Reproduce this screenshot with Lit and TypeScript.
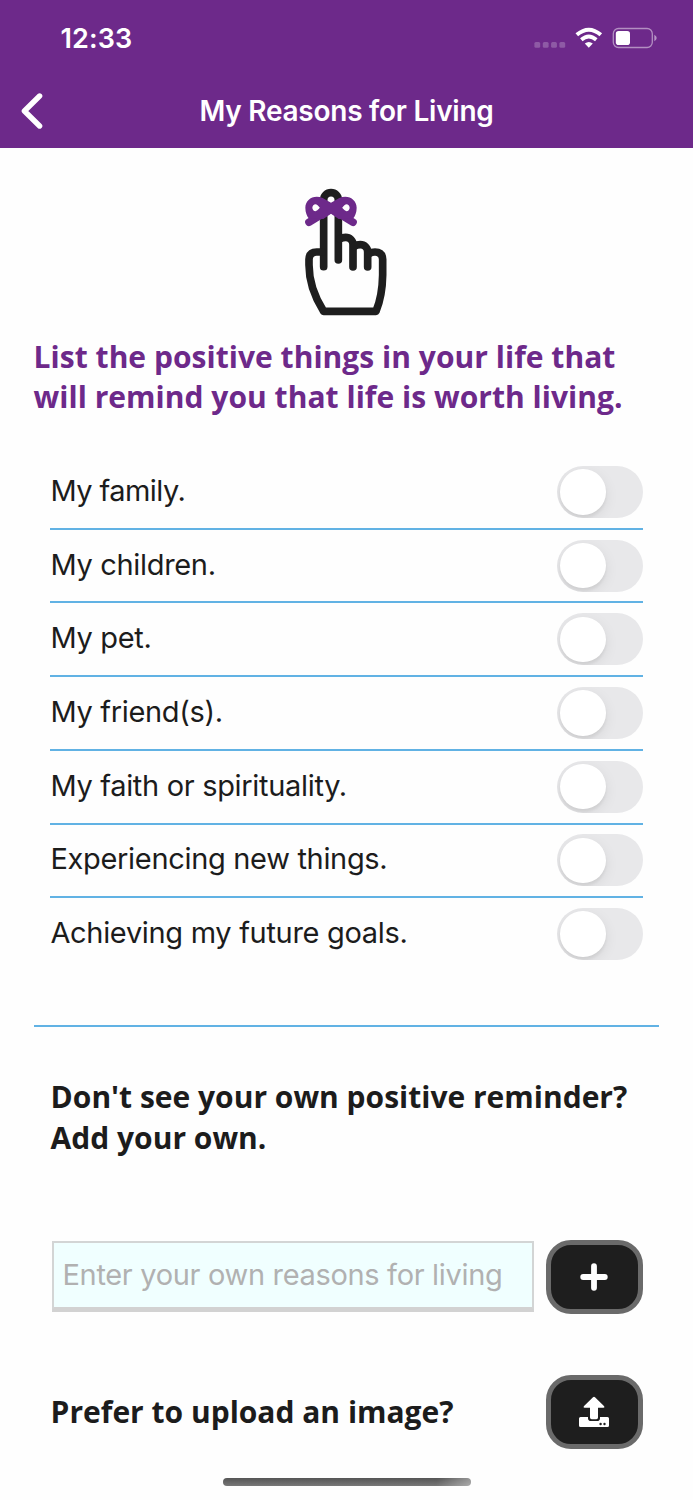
import { LitElement, html, css, svg } from "lit";
import { customElement, property, state } from "lit/decorators.js";
import { classMap } from "lit/directives/class-map.js";

@customElement("toggle-switch")
class ToggleSwitch extends LitElement {
  @property({ type: Boolean, reflect: true }) on = false;

  static styles = css`
    :host { display: block; flex: none; }
    .track {
      box-sizing: border-box; width: 85.4px; height: 52px; padding: 3.3px 3.1px;
      border-radius: 26px; background: #e8e8ea; overflow: hidden; display: flex;
    }
    .track.on { background: #6d298a; justify-content: flex-end; }
    .knob {
      width: 45.4px; height: 45.4px; border-radius: 50%; background: #fff;
      box-shadow: 0 3px 3px rgba(0, 0, 0, 0.06), 0 4px 14px rgba(0, 0, 0, 0.08);
    }
  `;

  render() {
    return html`<div class=${classMap({ track: true, on: this.on })}><div class="knob"></div></div>`;
  }
}

@customElement("app-root")
class AppRoot extends LitElement {
  @state() private reasons = [
    { text: "My family.", tight: true, on: false },
    { text: "My children.", tight: false, on: false },
    { text: "My pet.", tight: false, on: false },
    { text: "My friend(s).", tight: false, on: false },
    { text: "My faith or spirituality.", tight: false, on: false },
    { text: "Experiencing new things.", tight: false, on: false },
    { text: "Achieving my future goals.", tight: false, on: false },
  ];

  static styles = css`
    :host {
      display: flex; flex-direction: column; box-sizing: border-box;
      width: 693px; height: 1500px; background: #fefefe; overflow: hidden;
      color: #1c1c1c; font-family: Inter, sans-serif;
    }
    svg { display: block; }
    header {
      flex: none; height: 147.5px; background: #6d298a; color: #fff;
    }
    .status {
      box-sizing: border-box; height: 76px; padding: 0 36px 0 60.5px;
      display: flex; justify-content: space-between; align-items: center;
    }
    .time { font-size: 27px; font-weight: 580; line-height: 32px; padding-top: 1.5px; letter-spacing: 0.1px; }
    .nav {
      height: 69.6px; padding: 0 21px; display: grid;
      grid-template-columns: 22px 1fr 22px; align-items: center;
    }
    .title {
      margin: 0; text-align: center; white-space: nowrap;
      font-size: 28px; font-weight: 580; line-height: 36px; letter-spacing: -0.25px;
    }
    .hand { margin: 27.5px 0 0 280px; width: 130px; height: 150px; flex: none; }
    h2 {
      margin: 0; font-family: "Open Sans", sans-serif; font-weight: 700;
      font-size: 30px; line-height: 40.8px; white-space: nowrap;
    }
    .lead { color: #6d298a; margin: 11.6px 0 0 33.6px; letter-spacing: 0.03px; }
    .list { margin: 37.9px 50.4px 0; padding: 0; list-style: none; flex: none; }
    .row {
      box-sizing: border-box; height: 73.7px;
      display: flex; align-items: center; justify-content: space-between;
      border-bottom: 2px solid #61b2e4;
    }
    .row:last-child { border-bottom-color: transparent; }
    .label {
      font-size: 29px; font-weight: 370; line-height: 36px; padding-bottom: 2px;
      white-space: nowrap; letter-spacing: -0.32px;
    }
    .label.tight { letter-spacing: -0.55px; }
    .rule { flex: none; height: 2px; margin: 53.2px 34px 0; background: #61b2e4; }
    .own { margin: 50.3px 0 0 50.6px; }
    .entry {
      flex: none; margin: 80.7px 50.5px 0 52px; display: flex;
      justify-content: space-between; align-items: center;
    }
    .field {
      box-sizing: border-box; width: 482px; height: 70.5px; padding: 0 8.5px 1px;
      border: 2px solid #d3d5d5; border-bottom: 5.5px solid #d2d2d2;
      background: #f0ffff; color: #b1b1b1; display: flex; align-items: center;
      font-size: 29px; font-weight: 370; white-space: nowrap; letter-spacing: -0.33px;
    }
    .btn {
      box-sizing: border-box; width: 97px; height: 74px; padding: 0; flex: none;
      border: 5.3px solid #6a6a6a; border-radius: 25px; background: #1e1e1e;
      display: flex; align-items: center; justify-content: center;
    }
    .upload {
      flex: none; margin: 61.3px 50.5px 0 50.6px; display: flex;
      justify-content: space-between; align-items: center;
    }
    .upload h2 { padding-top: 1.8px; }
    .home {
      flex: none; width: 248px; height: 8.5px; border-radius: 5px; margin: 28.7px 0 0 222.5px;
      background:
        linear-gradient(100deg, transparent 86%, rgba(255, 255, 255, 0.36) 99%),
        linear-gradient(#555, #777);
    }
  `;

  private toggle(i: number) {
    this.reasons = this.reasons.map((r, n) => (n === i ? { ...r, on: !r.on } : r));
  }

  private statusIcons() {
    return html`<svg width="124" height="26" viewBox="533 25 124 26">
      ${[537.3, 545.7, 554, 562.3].map(
        (x) => svg`<rect x=${x - 2.9} y="42" width="5.8" height="5.8" rx="1.5" fill="#fff" opacity=".23"/>`
      )}
      <g fill="none" stroke="#fff">
        <path d="M576.8 34.8Q588.8 24.6 600.8 34.8" stroke-width="4"/>
        <path d="M581.3 39.7Q588.8 33.2 596.3 39.7" stroke-width="3.8"/>
      </g>
      <path d="M584.8 43.6Q588.8 40.2 592.8 43.6L588.8 47.7Z" fill="#fff"/>
      <rect x="613.3" y="28.5" width="39" height="19" rx="5.2" fill="none" stroke="#fff" stroke-opacity=".48" stroke-width="1.3"/>
      <rect x="615.8" y="31" width="14.2" height="14" rx="2.8" fill="#fff"/>
      <path d="M654.3 34.7Q656.7 36 656.7 38T654.3 41.3Z" fill="#fff" opacity=".5"/>
    </svg>`;
  }

  render() {
    return html`
      <header>
        <div class="status"><span class="time">12:33</span>${this.statusIcons()}</div>
        <div class="nav">
          <svg width="22" height="36" viewBox="0 0 22 36">
            <path d="M18.6 3L3.4 18L18.6 33" fill="none" stroke="#fff" stroke-width="5.4" stroke-linecap="round" stroke-linejoin="round"/>
          </svg>
          <h1 class="title">My Reasons for Living</h1>
        </div>
      </header>
      <svg class="hand" viewBox="0 0 390 450" fill="none" stroke-width="23" stroke-linecap="round" stroke-linejoin="round">
        <g stroke="#1e1e1e">
          <path d="M131 275V75A22 22 0 0 1 175 75V255"/>
          <path d="M180 192Q187 187 197 187A22 22 0 0 1 219 209V276"/>
          <path d="M223 214Q230 209 241 209A22 22 0 0 1 263 231V276"/>
          <path d="M267 236Q275 231 285 231Q307 231 308 253V300Q307 363 288 409H131Q87 340 87 270V253Q88 231 110 231H126"/>
        </g>
        <path stroke="#6d298a" d="M87 142L153 101L219 142"/>
        <path fill="#6d298a" fill-rule="evenodd" d="M153 83L128 69C101 57 76 74 76 98C76 113 81 123 86 130L130 132L153 116L176 132L220 130C225 123 230 113 230 98C230 74 205 57 178 69ZM120 98L112 90C106 84 97 90 97 98C97 106 106 112 112 106ZM186 98L194 90C200 84 209 90 209 98C209 106 200 112 194 106Z"/>
      </svg>
      <h2 class="lead">List the positive things in your life that<br />will remind you that life is worth living.</h2>
      <ul class="list">
        ${this.reasons.map(
          (r, i) => html`<li class="row">
            <span class=${classMap({ label: true, tight: r.tight })}>${r.text}</span>
            <toggle-switch ?on=${r.on} @click=${() => this.toggle(i)}></toggle-switch>
          </li>`
        )}
      </ul>
      <div class="rule"></div>
      <h2 class="own">Don't see your own positive reminder?<br />Add your own.</h2>
      <div class="entry">
        <div class="field">Enter your own reasons for living</div>
        <button class="btn" aria-label="Add">
          <svg width="28" height="28" viewBox="0 0 28 28"><path d="M14 3.2V24.8M3.2 14H24.8" stroke="#fff" stroke-width="5.8" stroke-linecap="round"/></svg>
        </button>
      </div>
      <div class="upload">
        <h2>Prefer to upload an image?</h2>
        <button class="btn" aria-label="Upload">
          <svg width="32" height="32" viewBox="0 0 32 32" fill="#fff">
            <path d="M2.5 21H10V22.2Q10 25 13 25H19Q22 25 22 22.2V21H29.5Q31 21 31 22.5V29.5Q31 31 29.5 31H2.5Q1 31 1 29.5V22.5Q1 21 2.5 21Z"/>
            <path d="M16 .7Q16.5 .7 17 1.2L26.2 10.2Q27 11.7 25.2 11.7H20V21.5Q20 23.2 18.3 23.2H13.7Q12 23.2 12 21.5V11.7H6.8Q5 11.7 5.8 10.2L15 1.2Q15.5 .7 16 .7Z"/>
            <circle cx="22.6" cy="28" r="1.2" fill="#1e1e1e"/><circle cx="26.5" cy="28" r="1.2" fill="#1e1e1e"/>
          </svg>
        </button>
      </div>
      <div class="home"></div>
    `;
  }
}
